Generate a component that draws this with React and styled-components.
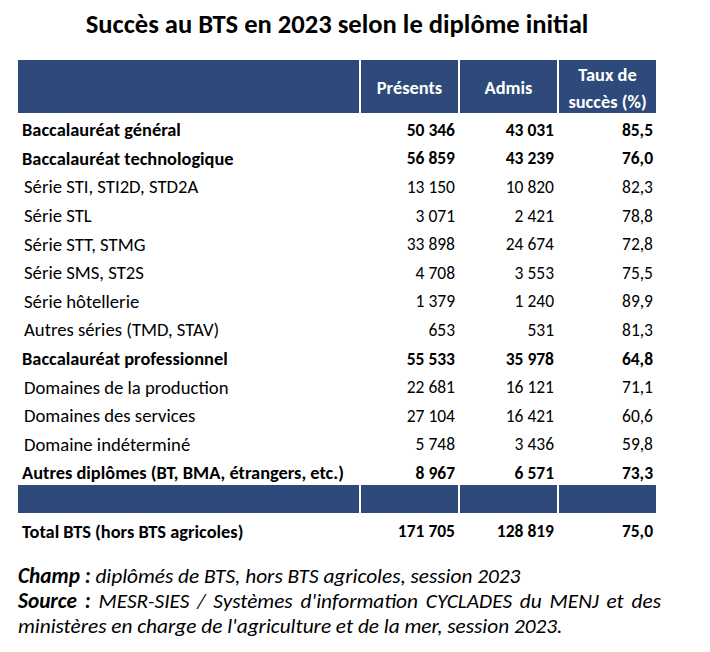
import React from "react";
import styled, { createGlobalStyle } from "styled-components";

const Global = createGlobalStyle`
  html, body { margin: 0; padding: 0; background: #ffffff; }
  body { font-family: Carlito, Lato, "Liberation Sans", sans-serif; color: #000; }
`;

const Page = styled.div`
  width: 710px;
  height: 652px;
  box-sizing: border-box;
  padding: 9px 0 0 18px;
  display: flex;
  flex-direction: column;
`;

const Title = styled.h1`
  margin: 0;
  width: 638px;
  text-align: center;
  font-size: 26.6px;
  font-weight: 700;
  line-height: 30px;
  white-space: nowrap;
`;

const Table = styled.div`
  margin-top: 21px;
  display: grid;
  grid-template-columns: 341px 97px 97px 97px;
  column-gap: 2px;
  width: 638px;
`;

const HeadCell = styled.div`
  background: #2d4a7a;
  color: #fff;
  font-weight: 700;
  font-size: 18.4px;
  height: ${(p) => p.$h}px;
  box-sizing: border-box;
  padding-top: ${(p) => (p.$h > 40 ? 2 : 0)}px;
  display: flex;
  flex-direction: column;
  align-items: center;
  justify-content: center;
  line-height: 27px;
  text-align: center;
`;

const Cell = styled.div`
  height: ${(p) => p.$h || 28.6}px;
  box-sizing: border-box;
  display: flex;
  align-items: center;
  justify-content: ${(p) => (p.$num ? "flex-end" : "flex-start")};
  padding: ${(p) => (p.$total ? 0 : 5)}px
    ${(p) => (p.$num ? 3 : 0)}px 0
    ${(p) => (p.$num ? 0 : p.$bold ? 4 : 6)}px;
  font-size: ${(p) => (p.$num ? 17.5 : p.$bold ? 18.4 : 18.7)}px;
  font-weight: ${(p) => (p.$bold ? 700 : 400)};
  white-space: nowrap;
`;

const Notes = styled.div`
  margin-top: 15px;
  width: 643px;
  font-style: italic;
  font-size: 21.3px;
  line-height: 25px;
`;

const Line = styled.div`
  white-space: ${(p) => (p.$justify ? "normal" : "nowrap")};
  text-align: ${(p) => (p.$justify ? "justify" : "left")};
  text-align-last: ${(p) => (p.$justify ? "justify" : "auto")};
`;

const rows = [
  ["Baccalauréat général", "50 346", "43 031", "85,5", true],
  ["Baccalauréat technologique", "56 859", "43 239", "76,0", true],
  ["Série STI, STI2D, STD2A", "13 150", "10 820", "82,3"],
  ["Série STL", "3 071", "2 421", "78,8"],
  ["Série STT, STMG", "33 898", "24 674", "72,8"],
  ["Série SMS, ST2S", "4 708", "3 553", "75,5"],
  ["Série hôtellerie", "1 379", "1 240", "89,9"],
  ["Autres séries (TMD, STAV)", "653", "531", "81,3"],
  ["Baccalauréat professionnel", "55 533", "35 978", "64,8", true],
  ["Domaines de la production", "22 681", "16 121", "71,1"],
  ["Domaines des services", "27 104", "16 421", "60,6"],
  ["Domaine indéterminé", "5 748", "3 436", "59,8"],
  ["Autres diplômes (BT, BMA, étrangers, etc.)", "8 967", "6 571", "73,3", true],
];

export default function App() {
  return (
    <>
      <Global />
      <Page>
        <Title>Succès au BTS en 2023 selon le diplôme initial</Title>
        <Table>
          <HeadCell $h={53} />
          <HeadCell $h={53}>Présents</HeadCell>
          <HeadCell $h={53}>Admis</HeadCell>
          <HeadCell $h={53}>
            <span>Taux de</span>
            <span>succès (%)</span>
          </HeadCell>
          {rows.map(([label, p, a, t, bold]) => (
            <React.Fragment key={label}>
              <Cell $bold={bold}>{label}</Cell>
              <Cell $num $bold={bold}>{p}</Cell>
              <Cell $num $bold={bold}>{a}</Cell>
              <Cell $num $bold={bold}>{t}</Cell>
            </React.Fragment>
          ))}
          <HeadCell $h={28.5} />
          <HeadCell $h={28.5} />
          <HeadCell $h={28.5} />
          <HeadCell $h={28.5} />
          <Cell $bold $total $h={36}>Total BTS (hors BTS agricoles)</Cell>
          <Cell $num $bold $total $h={36}>171 705</Cell>
          <Cell $num $bold $total $h={36}>128 819</Cell>
          <Cell $num $bold $total $h={36}>75,0</Cell>
        </Table>
        <Notes>
          <Line>
            <b>Champ :</b> diplômés de BTS, hors BTS agricoles, session 2023
          </Line>
          <Line $justify>
            <b>Source :</b> MESR-SIES / Systèmes d'information CYCLADES du MENJ et des
          </Line>
          <Line>
            ministères en charge de l'agriculture et de la mer, session 2023.
          </Line>
        </Notes>
      </Page>
    </>
  );
}
